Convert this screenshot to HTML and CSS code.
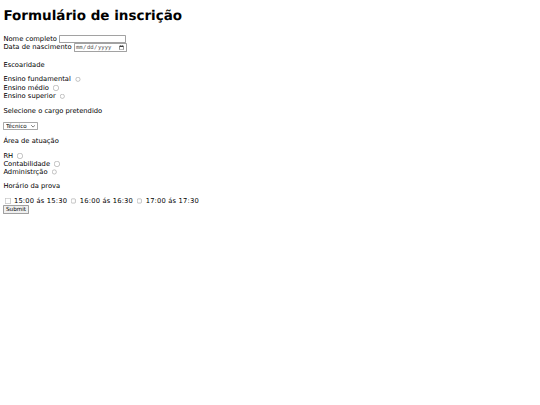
FILE: index.html
```html
<!DOCTYPE html>
<html lang="pt-BR">
<head>
<meta charset="utf-8">
<title>Formulário de inscrição</title>
<link rel="stylesheet" href="styles.css">
</head>
<body>
<div class="page">
<h1>Formulário de inscrição</h1>
<form class="form">
  <div class="row">
    <label for="nome">Nome completo</label>
    <input class="text-field" type="text" id="nome" name="nome">
  </div>
  <div class="row">
    <label for="nasc">Data de nascimento</label>
    <input class="date-field" type="date" id="nasc" name="nasc">
  </div>

  <p class="section section-first">Escoaridade</p>
  <div class="row"><label for="e1">Ensino fundamental</label><input class="radio" type="radio" id="e1" name="esc"></div>
  <div class="row"><label for="e2">Ensino médio</label><input class="radio" type="radio" id="e2" name="esc"></div>
  <div class="row"><label for="e3">Ensino superior</label><input class="radio" type="radio" id="e3" name="esc"></div>

  <p class="section">Selecione o cargo pretendido</p>
  <div class="row">
    <span class="select-wrap">
      <select class="select" name="cargo">
        <option>Técnico</option>
        <option>Analista</option>
      </select>
      <svg class="chev" width="10" height="6" viewBox="0 0 10 6" aria-hidden="true"><path d="M1 1l4 4 4-4" fill="none" stroke="#3b3b3b" stroke-width="1.6" stroke-linecap="round" stroke-linejoin="round"/></svg>
    </span>
  </div>

  <p class="section">Área de atuação</p>
  <div class="row row-tight"><label for="a1">RH</label><input class="radio" type="radio" id="a1" name="area"></div>
  <div class="row row-tight"><label for="a2">Contabilidade</label><input class="radio" type="radio" id="a2" name="area"></div>
  <div class="row row-tight"><label for="a3">Administrção</label><input class="radio" type="radio" id="a3" name="area"></div>

  <p class="section section-last">Horário da prova</p>
  <div class="row row-tight">
    <input class="check" type="checkbox" id="h1" name="h"><label class="slot" for="h1">15:00 ás 15:30</label>
    <input class="check" type="checkbox" id="h2" name="h"><label class="slot" for="h2">16:00 ás 16:30</label>
    <input class="check" type="checkbox" id="h3" name="h"><label class="slot" for="h3">17:00 ás 17:30</label>
  </div>
  <input class="submit" type="submit" value="Submit">
</form>
</div>
</body>
</html>
```

FILE: styles.css
```css
html,
body {
  margin: 0;
  background: #ffffff;
}

.page {
  zoom: 0.421875;
  padding: 8px;
  font-family: "DejaVu Sans", Verdana, sans-serif;
  font-size: 16px;
  color: #000000;
  text-rendering: geometricPrecision;
}

.page h1 {
  font-family: "DejaVu Sans", Verdana, sans-serif;
  font-size: 32px;
  font-weight: bold;
  line-height: 37px;
  margin: 13.44px 0 24px;
}

.section {
  margin: 16px 0;
  line-height: 19px;
}

.section-first {
  margin-top: 21px;
}

.section-last {
  margin-top: 14px;
}

.row {
  display: flex;
  align-items: center;
  gap: 5px;
  height: 20px;
}

.row-tight {
  height: 19px;
}

.text-field {
  box-sizing: border-box;
  width: 159px;
  height: 21px;
  padding: 1px 2px;
  border: 2px solid #a2a2a2;
  border-radius: 2px;
  background: #ffffff;
  font: 13.333px "DejaVu Sans", sans-serif;
}

.date-field {
  box-sizing: border-box;
  width: 126px;
  height: 21px;
  padding: 1px 2px;
  border: 2px solid #a2a2a2;
  border-radius: 2px;
  background: #ffffff;
  font: 13.333px "DejaVu Sans Mono", monospace;
  color: #555555;
}

.radio {
  margin: 0 3px 0 5px;
  width: 13px;
  height: 13px;
}

.check {
  margin: 0 3px 0 4px;
  width: 13px;
  height: 13px;
}

.slot {
  letter-spacing: 0.4px;
}

.select-wrap {
  position: relative;
  display: inline-block;
  height: 19px;
}

.select {
  appearance: none;
  -webkit-appearance: none;
  box-sizing: border-box;
  width: 83px;
  height: 19px;
  padding: 0 20px 0 4px;
  border: 2px solid #a8a8a8;
  border-radius: 2px;
  background: #ffffff;
  color: #000000;
  font: 13.333px "DejaVu Sans", sans-serif;
}

.chev {
  position: absolute;
  right: 7px;
  top: 7px;
  pointer-events: none;
}

.submit {
  box-sizing: border-box;
  height: 21px;
  padding: 1px 4px;
  border: 2px solid #a0a0a0;
  border-radius: 2px;
  background: #efefef;
  color: #000000;
  font: 13.333px "DejaVu Sans", sans-serif;
}
```
